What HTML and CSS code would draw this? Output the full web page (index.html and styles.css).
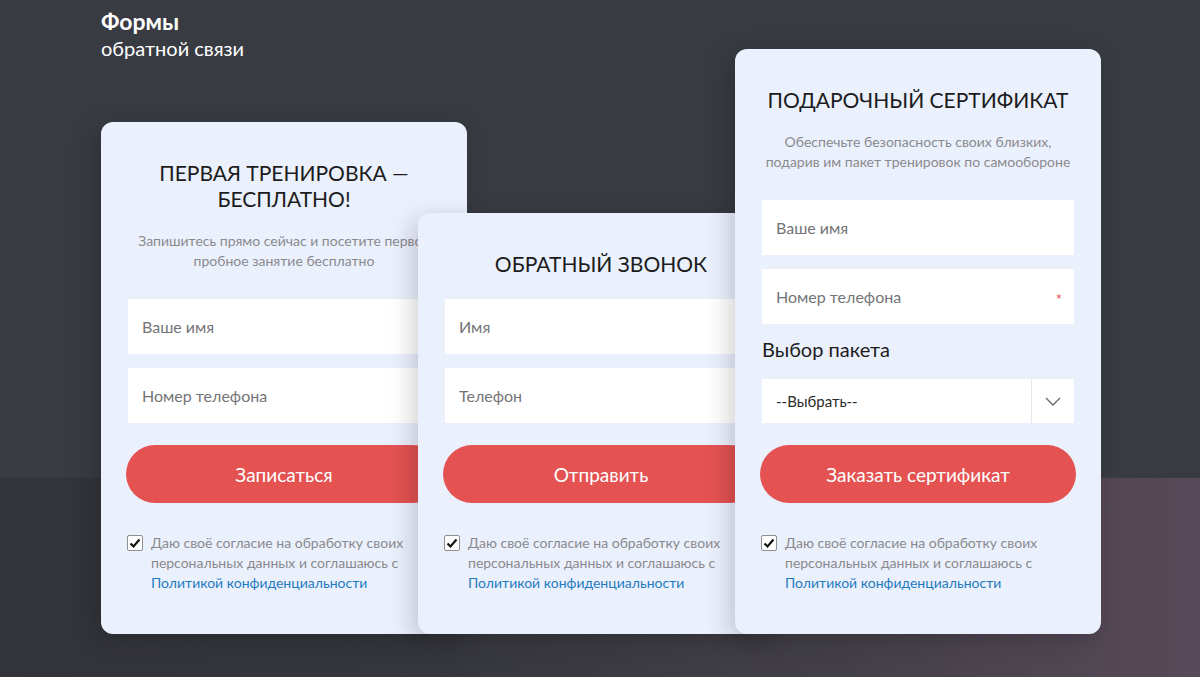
FILE: index.html
```html
<!DOCTYPE html>
<html lang="ru">

	<head>
		<meta charset="UTF-8" />
		<meta name="viewport" content="width=device-width, initial-scale=1.0" />
		<title>Формы обратной связи</title>
		<link rel="stylesheet" href="styles.css">
	</head>

	<body>
		<div class="page">
			<div class="head">
				<div class="head-title">Формы</div>
				<div class="head-sub">обратной связи</div>
			</div>

			<div class="forms">
				<form class="card">
					<h2 class="card-title">Первая тренировка —<br>бесплатно!</h2>
					<p class="card-text">Запишитесь прямо сейчас и посетите первое<br>пробное занятие бесплатно</p>
					<input class="field" type="text" placeholder="Ваше имя">
					<input class="field" type="text" placeholder="Номер телефона">
					<button class="btn" type="button">Записаться</button>
					<label class="consent">
						<span class="check">
							<svg width="12" height="12" viewBox="0 0 12 12"><path d="M1.5 6.5 L4.5 9.5 L10.5 2.5" fill="none" stroke="#111" stroke-width="2.2" /></svg>
						</span>
						<span>Даю своё согласие на обработку своих персональных данных и соглашаюсь с <a href="#">Политикой конфиденциальности</a></span>
					</label>
				</form>

				<form class="card">
					<h2 class="card-title solo">Обратный звонок</h2>
					<input class="field" type="text" placeholder="Имя">
					<input class="field" type="text" placeholder="Телефон">
					<button class="btn" type="button">Отправить</button>
					<label class="consent">
						<span class="check">
							<svg width="12" height="12" viewBox="0 0 12 12"><path d="M1.5 6.5 L4.5 9.5 L10.5 2.5" fill="none" stroke="#111" stroke-width="2.2" /></svg>
						</span>
						<span>Даю своё согласие на обработку своих персональных данных и соглашаюсь с <a href="#">Политикой конфиденциальности</a></span>
					</label>
				</form>

				<form class="card">
					<h2 class="card-title">Подарочный сертификат</h2>
					<p class="card-text">Обеспечьте безопасность своих близких,<br>подарив им пакет тренировок по самообороне</p>
					<input class="field" type="text" placeholder="Ваше имя">
					<div class="field-wrap">
						<input class="field" type="text" placeholder="Номер телефона">
						<span class="req">*</span>
					</div>
					<div class="label">Выбор пакета</div>
					<div class="select">
						<span class="select-value">--Выбрать--</span>
						<span class="select-arrow">
							<svg width="16" height="9" viewBox="0 0 16 9"><path d="M1 1 L8 8 L15 1" fill="none" stroke="#6a6a6a" stroke-width="1.4" /></svg>
						</span>
					</div>
					<button class="btn" type="button">Заказать сертификат</button>
					<label class="consent">
						<span class="check">
							<svg width="12" height="12" viewBox="0 0 12 12"><path d="M1.5 6.5 L4.5 9.5 L10.5 2.5" fill="none" stroke="#111" stroke-width="2.2" /></svg>
						</span>
						<span>Даю своё согласие на обработку своих персональных данных и соглашаюсь с <a href="#">Политикой конфиденциальности</a></span>
					</label>
				</form>
			</div>
		</div>
	</body>

</html>
```

FILE: styles.css
```css
* {
	box-sizing: border-box;
}

html,
body {
	margin: 0;
	height: 100%;
}

body {
	font-family: Lato, "Open Sans", sans-serif;
	background:
		linear-gradient(90deg, #323439 0, #35363d 35%, #433f48 70%, #584a58 100%) 0 478px / 100% 199px no-repeat,
		#393b43;
	overflow: hidden;
}

.page {
	padding-left: 101px;
}

.head {
	padding-top: 9px;
	color: #fff;
}

.head-title {
	font-size: 23px;
	font-weight: 700;
	line-height: 24px;
}

.head-sub {
	margin-top: 3px;
	font-size: 20px;
	line-height: 24px;
}

.forms {
	display: flex;
	align-items: flex-end;
	margin-top: -11px;
}

.card {
	position: relative;
	flex: 0 0 366px;
	width: 366px;
	padding: 38px 27px 41px;
	background: #ebf0fd;
	border-radius: 12px;
	display: flex;
	flex-direction: column;
	box-shadow: -6px 6px 24px rgba(0, 0, 0, 0.18);
}

.card + .card {
	margin-left: -49px;
}

.card-title {
	margin: 0 0 19px;
	font-size: 21px;
	font-weight: 400;
	line-height: 26px;
	text-transform: uppercase;
	text-align: center;
	color: #1c1c20;
}

.card-title.solo {
	margin-bottom: 22px;
}

.card-text {
	margin: 0 0 28px;
	font-size: 14px;
	line-height: 20px;
	color: #8a8a8e;
	text-align: center;
	white-space: nowrap;
}

.field {
	display: block;
	width: 100%;
	height: 55px;
	padding: 0 14px;
	border: 0;
	background: #fff;
	font-family: Lato, sans-serif;
	font-size: 16px;
	color: #333;
	outline: none;
}

.field::placeholder {
	color: #747477;
}

.field + .field,
.field + .field-wrap {
	margin-top: 14px;
}

.field-wrap {
	position: relative;
}

.req {
	position: absolute;
	right: 12px;
	top: 21px;
	font-size: 15px;
	color: #e45252;
}

.label {
	margin: 14px 0 19px;
	font-size: 20px;
	line-height: 22px;
	color: #1c1c20;
}

.select {
	display: flex;
	height: 44px;
	background: #fff;
}

.select-value {
	flex: 1;
	padding-left: 14px;
	font-size: 15px;
	line-height: 44px;
	color: #2a2a2a;
}

.select-arrow {
	width: 43px;
	border-left: 1px solid #e4e6ea;
	display: flex;
	align-items: center;
	justify-content: center;
}

.btn {
	margin: 22px -2px 0;
	height: 58px;
	border: 0;
	border-radius: 29px;
	background: #e45252;
	color: #fff;
	font-family: Lato, sans-serif;
	font-size: 19px;
	cursor: pointer;
}

.consent {
	display: flex;
	margin-top: 30px;
	font-size: 14px;
	line-height: 20px;
	color: #8a8a8e;
}

.check {
	flex: 0 0 16px;
	width: 16px;
	height: 16px;
	margin: 2px 8px 0 -1px;
	border: 1px solid #8f8f8f;
	border-radius: 2px;
	background: #fff;
	display: flex;
	align-items: center;
	justify-content: center;
}

.consent a {
	color: #1f7bc0;
	text-decoration: none;
}
```
